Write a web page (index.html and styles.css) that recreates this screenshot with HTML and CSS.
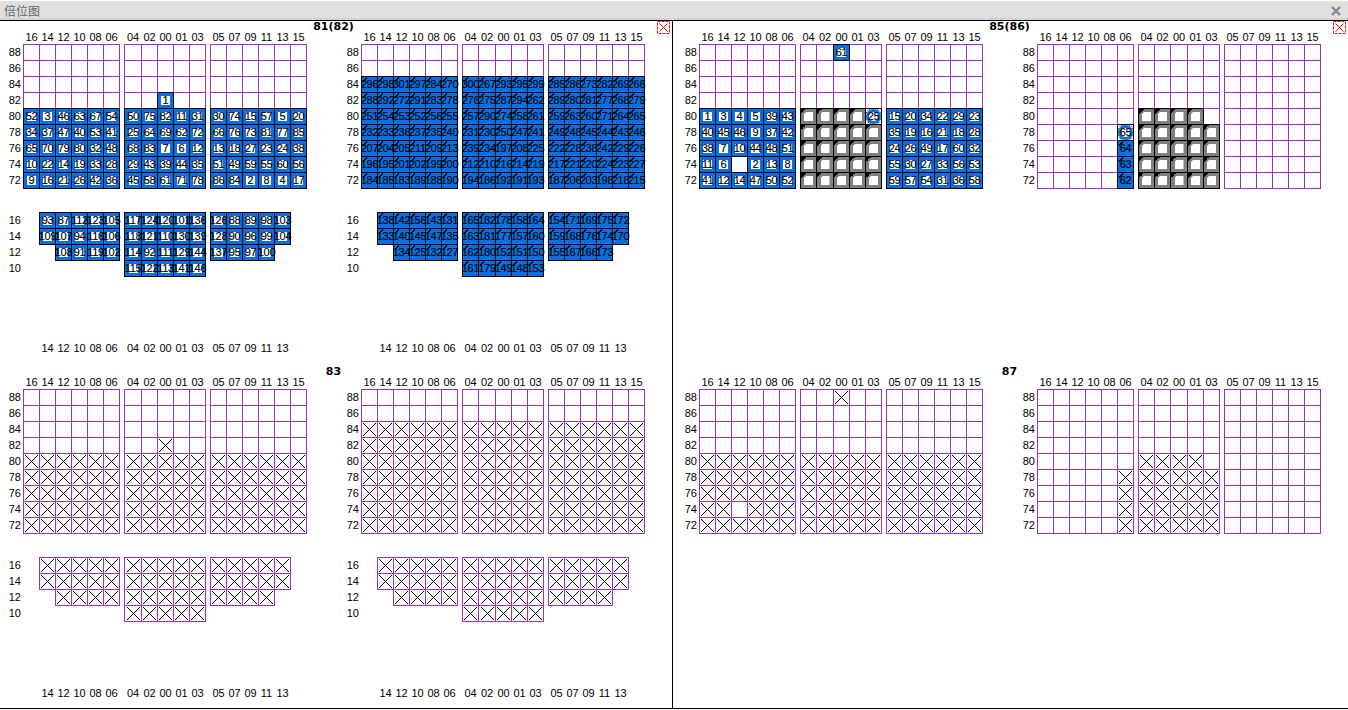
FILE: index.html

```html
<!DOCTYPE html>
<html lang="zh-CN">
<head>
    <meta charset="UTF-8">
    <meta name="viewport" content="width=device-width, initial-scale=1.0">
    <title>倍位图</title>
    <link rel="stylesheet" href="styles.css">
</head>
<body>
    <div class="titlebar">
        <span class="titlebar-text">倍位图</span>
        <svg class="titlebar-close" width="10" height="10" viewBox="0 0 10 10">
            <path d="M1 1L9 9M9 1L1 9" stroke="#85858a" stroke-width="2.4" fill="none"/>
        </svg>
    </div>

    <div class="stage">
        <div class="half half-left" id="halfLeft"></div>
        <div class="half half-right" id="halfRight"></div>
    </div>

    <script src="script.js"></script>
</body>
</html>
```

FILE: styles.css

```css
* {
    box-sizing: border-box;
}

body {
    margin: 0;
    height: 710px;
    overflow: hidden;
    background-color: white;
    font-family: "Liberation Sans", Arial, sans-serif;
    font-size: 11px;
    color: black;
}

.titlebar {
    margin-top: 1px;
    height: 20px;
    padding: 0 7px 0 4px;
    display: flex;
    justify-content: space-between;
    align-items: center;
    background-color: #e0e0e2;
    border-bottom: 1px solid black;
    box-shadow: inset 0 -2px 0 #d2d2d4;
}

.titlebar-text {
    font-family: "Noto Sans CJK SC", sans-serif;
    font-size: 12px;
    line-height: 16px;
    color: #666;
}

.stage {
    height: 688px;
    display: grid;
    grid-template-columns: 673px 675px;
    border-bottom: 1px solid black;
}

.half {
    display: grid;
    grid-template-columns: minmax(0, 1fr);
    grid-template-rows: 345px 1fr;
    min-height: 0;
}

.half-left {
    border-right: 1px solid black;
}

.half-right {
    padding-left: 3px;
}

.bay {
    position: relative;
}

.bay-title {
    height: 10px;
    width: 644px;
    padding-left: 23px;
    text-align: center;
    font-family: "DejaVu Sans", sans-serif;
    font-weight: bold;
    font-size: 11px;
    line-height: 12px;
}

.bay-flag {
    position: absolute;
    top: 0;
    right: 2px;
}

.bay-maps {
    display: flex;
}

.map {
    flex: none;
    width: 338px;
}

.map-row {
    display: flex;
}

.deck-row {
    margin-top: 24px;
}

.foot-row {
    margin-top: 66px;
}

.axis {
    width: 21px;
    margin-right: 2px;
    display: grid;
    grid-auto-rows: 16px;
    text-align: right;
}

.axis span {
    height: 17px;
    line-height: 17px;
}

.block {
    display: grid;
    grid-template-columns: repeat(6, 16px);
    grid-auto-rows: 16px;
    margin-right: 5px;
}

.block-short {
    grid-template-columns: repeat(5, 16px);
}

.wide-0 {
    grid-template-columns: 17px repeat(4, 16px);
}

.wide-1 {
    grid-template-columns: 16px 17px repeat(3, 16px);
}

.wide-2 {
    grid-template-columns: 16px 16px 17px 16px 16px;
}

.col-labels {
    grid-auto-rows: 13px;
}

.col-labels span {
    width: calc(100% + 1px);
    text-align: center;
    line-height: 13px;
}

.cell {
    width: calc(100% + 1px);
    height: 17px;
    border: 1px solid #9932cc;
    display: flex;
    justify-content: center;
    align-items: flex-start;
}

.crossed {
    background:
        linear-gradient(45deg, transparent calc(50% - 0.6px), black calc(50% - 0.6px), black calc(50% + 0.6px), transparent calc(50% + 0.6px)) center / 13px 13px no-repeat,
        linear-gradient(-45deg, transparent calc(50% - 0.6px), black calc(50% - 0.6px), black calc(50% + 0.6px), transparent calc(50% + 0.6px)) center / 13px 13px no-repeat;
}

.used {
    z-index: 1;
    border-color: black;
    background-color: #0a70e0;
}

.num {
    width: 9px;
    height: 9px;
    margin-top: 3px;
    display: flex;
    justify-content: center;
    align-items: center;
    white-space: nowrap;
    font-family: "Liberation Sans Narrow", "Liberation Sans", sans-serif;
    font-size: 11px;
    letter-spacing: -0.3px;
    line-height: 9px;
    -webkit-text-stroke: 0.15px black;
    background-color: white;
}

.tick {
    background:
        linear-gradient(to bottom right, transparent calc(50% - 0.6px), black calc(50% - 0.6px), black calc(50% + 0.6px), transparent calc(50% + 0.6px)) 1px 0 / 4px 5px no-repeat,
        #0a70e0;
}

.tick .num {
    background: none;
}

.gray {
    background:
        linear-gradient(135deg, black 50%, transparent 50%) 0 0 / 5px 5px no-repeat,
        #808080;
}

.gray .num {
    clip-path: polygon(2px 0, 100% 0, 100% 100%, 0 100%, 0 2px);
}

.circled {
    background-color: white;
}

.circled .num {
    width: 15px;
    height: 15px;
    margin-top: 0;
    border: 3px solid #0a70e0;
    border-radius: 50%;
    outline: 1px dotted black;
    outline-offset: 0;
}
```

FILE: script.js

```js
// 每个贝位: 行用 | 分三段
// . 空格  - 无格  g 灰格  c25 圈选  数字 = 箱号
const HOLD_TIERS = ["88", "86", "84", "82", "80", "78", "76", "74", "72"];
const DECK_TIERS = ["16", "14", "12", "10"];
const TOP_COLS = ["16 14 12 10 08 06", "04 02 00 01 03", "05 07 09 11 13 15"];
const FOOT_COLS = ["- 14 12 10 08 06", "04 02 00 01 03", "05 07 09 11 13 -"];
const EMPTY = ". . . . . .|. . . . .|. . . . . .";

const MAP_81 = {
    wide: 0,
    hold: [
        EMPTY, EMPTY, EMPTY,
        ". . . . . .|. . 1 . .|. . . . . .",
        "52 3 46 63 67 54|50 75 82 11 31|30 74 15 57 5 20",
        "34 37 47 40 53 41|25 64 69 62 72|66 76 73 81 77 85",
        "65 70 79 80 32 48|68 83 7 6 12|13 18 27 23 24 38",
        "10 22 14 19 33 28|29 43 39 44 35|51 49 59 55 60 56",
        "9 16 21 26 42 36|45 58 61 71 78|86 84 2 8 4 17"
    ],
    deck: [
        "- 93 87 112 123 105|117 124 120 101 136|126 88 89 98 103 -",
        "- 109 107 94 116 106|118 121 110 130 139|128 90 96 99 104 -",
        "- - 108 91 119 102|114 92 111 129 144|137 95 97 100 - -",
        "- - - - - -|115 122 113 141 146|- - - - - -"
    ]
};

const MAP_82 = {
    wide: 1,
    tick: true,
    hold: [
        EMPTY, EMPTY,
        "296 298 301 297 284 270|300 267 293 295 299|285 286 273 282 269 266",
        "288 292 272 291 283 278|276 275 287 294 262|289 280 281 277 268 279",
        "251 254 253 252 256 255|257 290 274 258 261|259 263 260 271 264 265",
        "232 233 236 237 235 240|231 230 250 247 241|249 248 245 244 243 246",
        "207 204 205 211 209 213|239 234 197 208 225|222 228 238 242 229 226",
        "196 195 201 202 199 200|212 210 216 214 219|217 221 220 224 223 227",
        "184 185 183 189 188 190|194 186 192 191 193|187 206 203 198 218 215"
    ],
    deck: [
        "- 138 142 156 143 131|165 182 178 158 164|154 171 169 175 172 -",
        "- 133 140 145 147 135|163 181 177 157 160|159 168 176 174 170 -",
        "- - 134 125 132 127|162 180 152 151 150|155 167 166 173 - -",
        "- - - - - -|161 179 149 148 153|- - - - - -"
    ]
};

const MAP_85 = {
    wide: 1,
    hold: [
        ". . . . . .|. . 61 . .|. . . . . .",
        EMPTY, EMPTY, EMPTY,
        "1 3 4 5 39 43|g g g g c25|15 20 34 22 29 23",
        "40 45 46 9 37 42|g g g g g|35 19 16 21 18 28",
        "38 7 10 44 48 51|g g g g g|24 26 49 17 60 32",
        "11 6 . 2 13 8|g g g g g|55 30 27 33 56 53",
        "41 12 14 47 50 52|g g g g g|59 57 54 31 36 58"
    ]
};

const MAP_86 = {
    wide: 2,
    tick: true,
    hold: [
        EMPTY, EMPTY, EMPTY, EMPTY,
        ". . . . . .|g g g g .|. . . . . .",
        ". . . . . c65|g g g g g|. . . . . .",
        ". . . . . 64|g g g g g|. . . . . .",
        ". . . . . 63|g g g g g|. . . . . .",
        ". . . . . 62|g g g g g|. . . . . ."
    ]
};

function el(tag, className, text) {
    const node = document.createElement(tag);
    if (className) node.className = className;
    if (text) node.textContent = text;
    return node;
}

function blockClass(i, wide) {
    if (i === 1) return "block block-short wide-" + wide;
    return "block";
}

function makeAxis(labels) {
    const axis = el("div", "axis");
    labels.forEach(function (label) {
        axis.appendChild(el("span", "", label));
    });
    return axis;
}

function makeColRow(cols, wide, className) {
    const row = el("div", "map-row " + className);
    row.appendChild(el("div", "axis"));
    cols.forEach(function (line, i) {
        const block = el("div", blockClass(i, wide) + " col-labels");
        line.split(" ").forEach(function (label) {
            block.appendChild(el("span", "", label === "-" ? "" : label));
        });
        row.appendChild(block);
    });
    return row;
}

function makeCell(token, map, crossed) {
    if (token === "-") return el("div");
    if (token === ".") return el("div", "cell");
    if (crossed) return el("div", "cell crossed");

    const cell = el("div", "cell used");
    if (token === "g") {
        cell.classList.add("gray");
        cell.appendChild(el("span", "num"));
    } else if (token[0] === "c") {
        cell.classList.add("circled");
        cell.appendChild(el("span", "num", token.slice(1)));
    } else {
        if (map.tick) cell.classList.add("tick");
        cell.appendChild(el("span", "num", token));
    }
    return cell;
}

function makeGridRow(tiers, lines, map, crossed, className) {
    const row = el("div", "map-row " + className);
    row.appendChild(makeAxis(tiers));
    for (let i = 0; i < 3; i++) {
        const block = el("div", blockClass(i, map.wide));
        lines.forEach(function (line) {
            line.split("|")[i].split(" ").forEach(function (token) {
                block.appendChild(makeCell(token, map, crossed));
            });
        });
        row.appendChild(block);
    }
    return row;
}

function makeMap(map, crossed) {
    const box = el("div", "map");
    box.appendChild(makeColRow(TOP_COLS, map.wide, "top-row"));
    box.appendChild(makeGridRow(HOLD_TIERS, map.hold, map, crossed, "hold-row"));
    if (map.deck) {
        box.appendChild(makeGridRow(DECK_TIERS, map.deck, map, crossed, "deck-row"));
        box.appendChild(makeColRow(FOOT_COLS, map.wide, "foot-row"));
    }
    return box;
}

function makeFlag() {
    const ns = "http://www.w3.org/2000/svg";
    const svg = document.createElementNS(ns, "svg");
    svg.setAttribute("class", "bay-flag");
    svg.setAttribute("width", "13");
    svg.setAttribute("height", "13");
    svg.innerHTML = '<rect x="0.5" y="0.5" width="12" height="12" fill="white" stroke="#e81010" stroke-dasharray="3 1"/>' +
        '<path d="M2.5 2.5L10.5 10.5M10.5 2.5L2.5 10.5" stroke="#e81010" fill="none"/>';
    return svg;
}

function makeBay(title, maps, crossed) {
    const bay = el("div", "bay");
    bay.appendChild(el("div", "bay-title", title));
    if (!crossed) bay.appendChild(makeFlag());
    const row = el("div", "bay-maps");
    maps.forEach(function (map) {
        row.appendChild(makeMap(map, crossed));
    });
    bay.appendChild(row);
    return bay;
}

const left = document.getElementById("halfLeft");
left.appendChild(makeBay("81(82)", [MAP_81, MAP_82], false));
left.appendChild(makeBay("83", [MAP_81, MAP_82], true));

const right = document.getElementById("halfRight");
right.appendChild(makeBay("85(86)", [MAP_85, MAP_86], false));
right.appendChild(makeBay("87", [MAP_85, MAP_86], true));
```
